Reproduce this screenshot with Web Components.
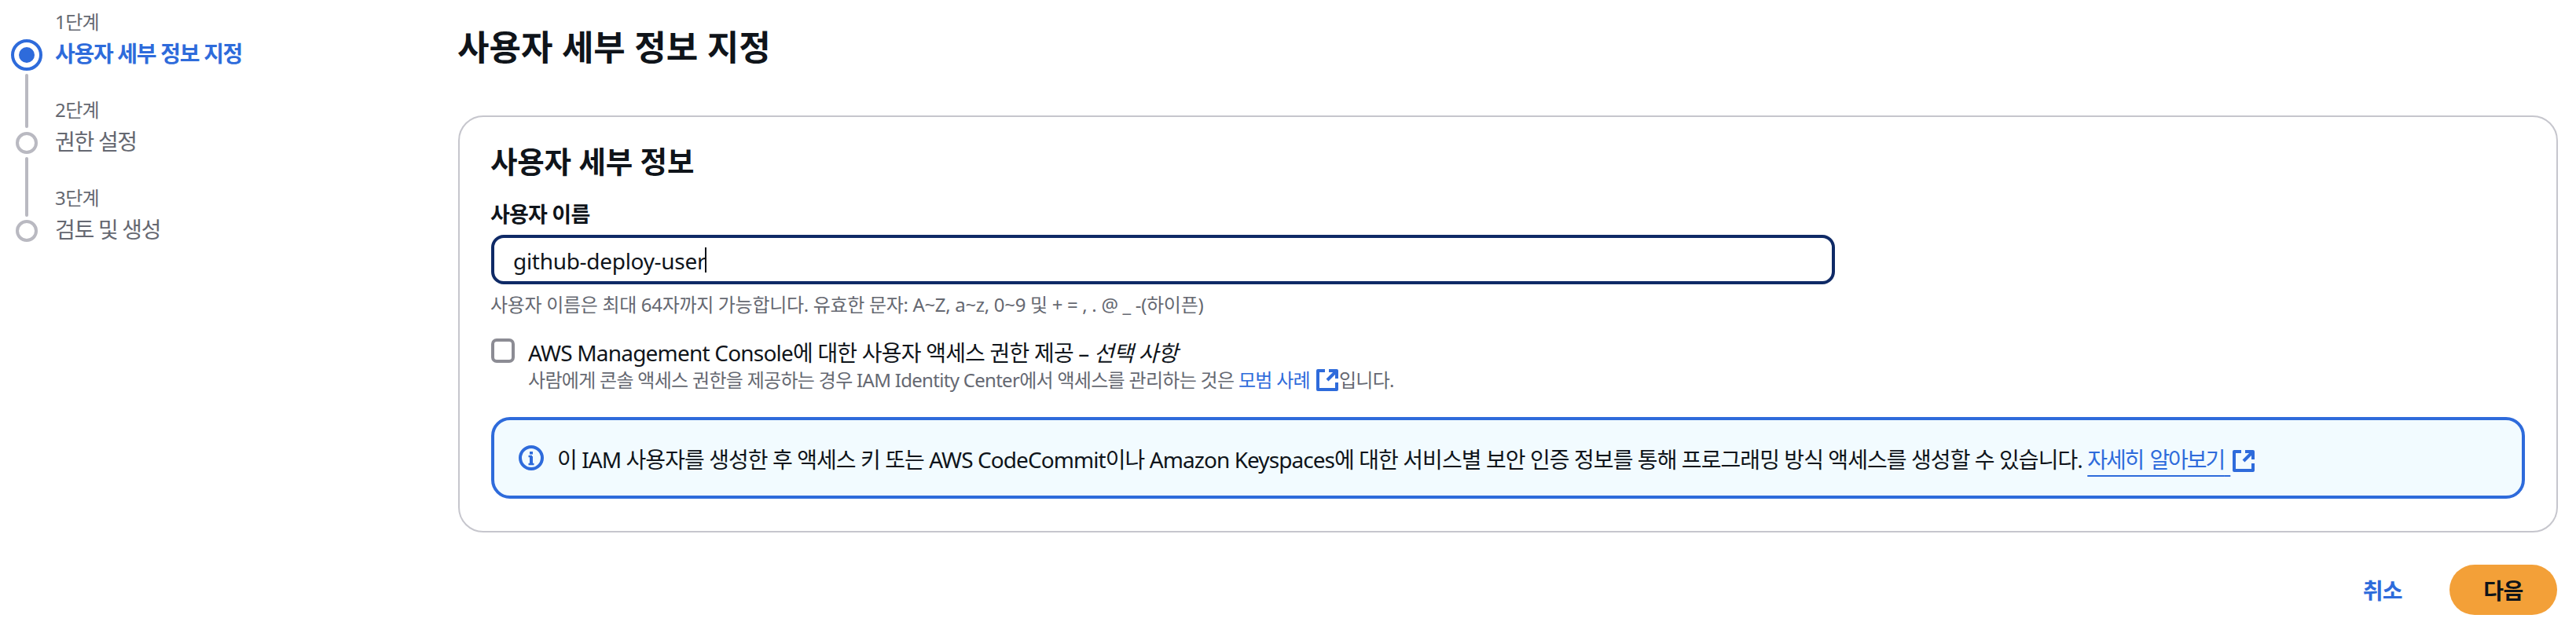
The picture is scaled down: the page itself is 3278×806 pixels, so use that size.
<!DOCTYPE html>
<html lang="ko"><head><meta charset="utf-8"><title>사용자 세부 정보 지정</title>
<style>
html,body{margin:0;padding:0;background:#fff}
body{font-family:"Noto Sans","Noto Sans CJK KR",sans-serif;color:#0f141a;width:3278px;height:806px;overflow:hidden}
</style></head><body>
<wizard-page>
  <wizard-nav slot="nav">
    <wizard-step slot="steps" step="1단계" active>사용자 세부 정보 지정</wizard-step>
    <wizard-step slot="steps" step="2단계">권한 설정</wizard-step>
    <wizard-step slot="steps" step="3단계">검토 및 생성</wizard-step>
  </wizard-nav>
  <page-title slot="title">사용자 세부 정보 지정</page-title>
  <form-card slot="card" heading="사용자 세부 정보">
    <text-field label="사용자 이름" value="github-deploy-user" hint="사용자 이름은 최대 64자까지 가능합니다. 유효한 문자: A~Z, a~z, 0~9 및 + = , . @ _ -(하이픈)"></text-field>
    <check-option>
      AWS Management Console에 대한 사용자 액세스 권한 제공 – <i>선택 사항</i>
      <span slot="desc">사람에게 콘솔 액세스 권한을 제공하는 경우 IAM Identity Center에서 액세스를 관리하는 것은 <ext-link>모범 사례</ext-link>입니다.</span>
    </check-option>
    <info-alert>이 IAM 사용자를 생성한 후 액세스 키 또는 AWS CodeCommit이나 Amazon Keyspaces에 대한 서비스별 보안 인증 정보를 통해 프로그래밍 방식 액세스를 생성할 수 있습니다. <ext-link underline>자세히 알아보기</ext-link></info-alert>
  </form-card>
  <form-actions slot="actions"></form-actions>
</wizard-page>
<script>
function el(name, html){
  customElements.define(name, class extends HTMLElement{
    constructor(){super();this.attachShadow({mode:'open'});}
    connectedCallback(){
      this.shadowRoot.innerHTML = typeof html==='function'?html(this):html;
    }
  });
}
el('wizard-page',`<style>
:host{display:grid;grid-template-columns:583px 2672px;width:3278px;height:806px;box-sizing:border-box}
.main{display:flex;flex-direction:column;min-width:0}
</style>
<slot name="nav"></slot>
<div class="main"><slot name="title"></slot><slot name="card"></slot><slot name="actions"></slot></div>`);
el('wizard-nav',`<style>
:host{display:flex;padding:10px 0 0 14px;gap:16px;align-items:flex-start}
.rail{display:flex;flex-direction:column;align-items:center;width:40px;margin-top:40px}
.on{box-sizing:border-box;width:40px;height:40px;border:4px solid #2e6bdb;border-radius:50%;display:flex;align-items:center;justify-content:center}
.on::after{content:"";width:20px;height:20px;background:#2e6bdb;border-radius:50%}
.off{box-sizing:border-box;width:28px;height:28px;border:4px solid #b9b9c1;border-radius:50%}
.ln{width:4px;background:#b9b9c1;border-radius:2px}
.l1{height:69px;margin:4px 0 5px}
.l2{height:76px;margin:4px 0}
.list{display:flex;flex-direction:column}
</style>
<div class="rail" aria-hidden="true"><div class="on"></div><div class="ln l1"></div><div class="off"></div><div class="ln l2"></div><div class="off"></div></div>
<div class="list"><slot name="steps"></slot></div>`);
el('wizard-step',h=>`<style>
:host{display:flex;flex-direction:column;height:112px}
.s{font-size:24px;line-height:36px;color:#656871;letter-spacing:-.6px}
.t{font-size:28px;line-height:44px;color:#656871;white-space:nowrap;letter-spacing:-1.3px}
:host([active]) .t{color:#2e6bdb;font-weight:700;letter-spacing:-1.3px}
</style><div class="s">${h.getAttribute('step')}</div><div class="t"><slot></slot></div>`);
el('page-title',`<style>
:host{display:block;font-size:44px;font-weight:700;line-height:60px;padding-top:30px;height:147px;box-sizing:border-box;white-space:nowrap;margin-left:-1px}
</style><slot></slot>`);
el('form-card',h=>`<style>
:host{display:block;box-sizing:border-box;width:2672px;height:531px;border:2px solid #c6c6cd;border-radius:32px;padding:31px 40px 0}
h2{margin:0 0 21px -1px;font-size:37.5px;line-height:52px;font-weight:700;letter-spacing:-.2px}
</style><h2>${h.getAttribute('heading')}</h2><slot></slot>`);
el('text-field',h=>`<style>
:host{display:block}
.l{font-size:27px;font-weight:700;line-height:40px;margin:0 0 6px -1px;letter-spacing:-.8px}
.i{box-sizing:border-box;width:1710px;height:63px;border:4px solid #0f2a66;border-radius:16px;padding:3px 24px 0;display:flex;align-items:center;font-size:28px;letter-spacing:-.3px}
.c{display:inline-block;width:2px;height:32px;background:#0f141a;margin:-3px 0 0 -1px}
.h{font-size:24px;line-height:36px;color:#656871;margin:8px 0 -1px -1px;white-space:nowrap;letter-spacing:-.32px}
</style><div class="l">${h.getAttribute('label')}</div>
<div class="i"><span>${h.getAttribute('value')}</span><span class="c"></span></div>
<div class="h">${h.getAttribute('hint')}</div>`);
el('check-option',`<style>
:host{display:flex;gap:17px;margin-top:24px}
.b{box-sizing:border-box;width:30px;height:31px;border:4px solid #8c8c94;border-radius:7px;margin-top:2px;flex:none}
.t{font-size:28px;line-height:36px;white-space:nowrap;letter-spacing:-.8px;padding-top:2px;margin-bottom:-2px}
.d{font-size:24px;line-height:36px;color:#656871;white-space:nowrap;margin-top:1px;letter-spacing:-.7px}
</style><div class="b"></div><div><div class="t"><slot></slot></div><div class="d"><slot name="desc"></slot></div></div>`);
el('info-alert',`<style>
:host{display:flex;align-items:center;box-sizing:border-box;width:2588px;height:104px;margin-top:29px;border:4px solid #2e6bdb;border-radius:24px;background:#f2fbff;padding:0 31px;font-size:28px;white-space:nowrap;gap:17px;letter-spacing:-.93px}
svg{flex:none;display:block}
.x{padding-top:2px}
</style><svg width="32" height="32" viewBox="0 0 32 32" fill="none" stroke="#2e6bdb"><circle cx="16" cy="16" r="14" stroke-width="4"/><path d="M16 14v9" stroke-width="4"/><path d="M12.5 24h7M12.5 14H17" stroke-width="2.5"/><path d="M16 8v3.5" stroke-width="4"/></svg><div class="x"><slot></slot></div>`);
el('ext-link',h=>`<style>
:host{display:inline;color:#2e6bdb}
a{color:inherit;text-decoration:none}
:host([underline]) a{text-decoration:underline;text-decoration-thickness:2px;text-underline-offset:9px;letter-spacing:-2.1px;word-spacing:3px}
svg{vertical-align:-5px;margin-left:8px;margin-right:1px}
:host([underline]) svg{margin-left:3px}
</style><a><slot></slot>${h.hasAttribute('underline')?'&nbsp;':''}</a><svg width="28" height="28" viewBox="0 0 28 28" fill="none" stroke="#2e6bdb" stroke-width="4" stroke-linejoin="round"><path d="M11 2H2v24h24v-9"/><path d="M16 2h10v10"/><path d="M26 2 14 14"/></svg>`);
el('form-actions',`<style>
:host{display:flex;justify-content:flex-end;align-items:center;gap:60px;width:2671px;margin-top:41px}
.c{color:#2e6bdb;font-size:28px;font-weight:700;letter-spacing:-.6px}
.n{display:flex;align-items:center;justify-content:center;width:137px;height:64px;border-radius:32px;background:#f3a038;font-size:28px;font-weight:700;color:#0f141a;letter-spacing:-.6px}
</style><span class="c">취소</span><span class="n">다음</span>`);
</script>
</body></html>
